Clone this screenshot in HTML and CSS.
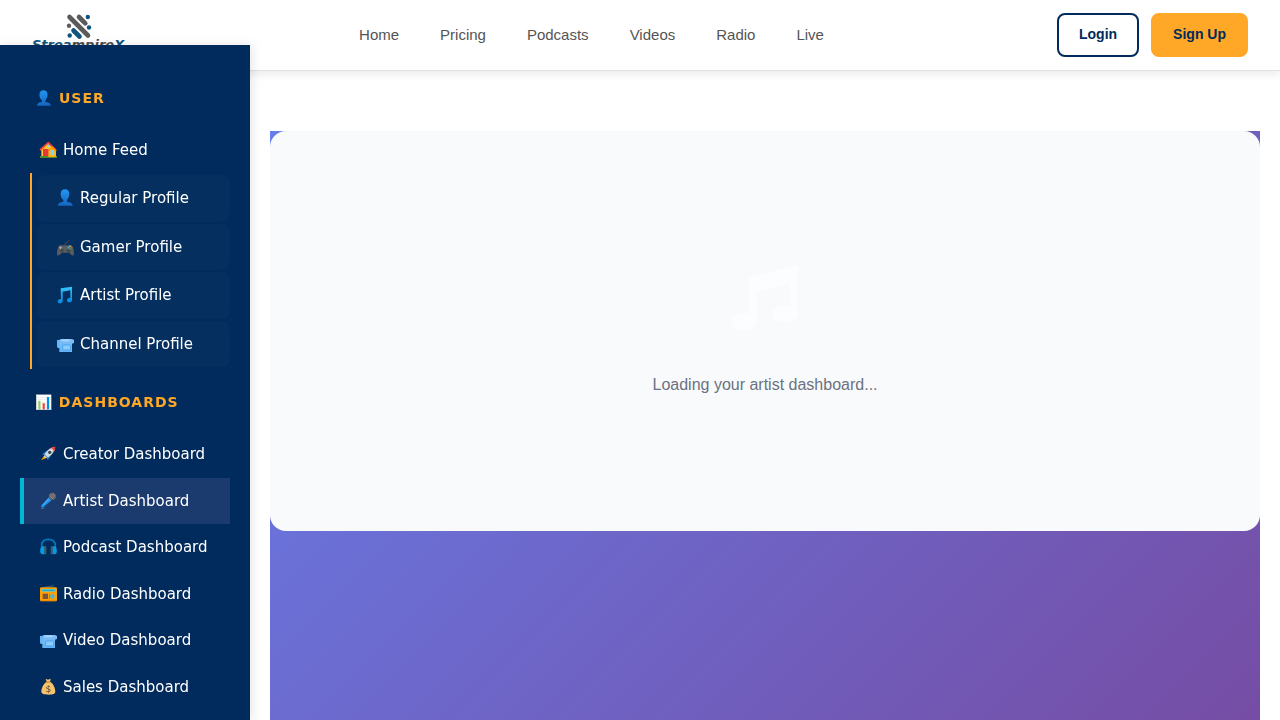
FILE: index.html
```html
<!DOCTYPE html>
<html lang="en">
<head>
<meta charset="utf-8">
<meta name="viewport" content="width=device-width, initial-scale=1">
<title>StreampireX</title>
<link rel="stylesheet" href="styles.css">
</head>
<body>
<svg class="sprite" width="0" height="0" aria-hidden="true">
  <defs>
    <linearGradient id="blue" x1="0" y1="0" x2="0" y2="1"><stop offset="0" stop-color="#2196f3"/><stop offset="1" stop-color="#1565c0"/></linearGradient>
    <linearGradient id="cyan" x1="0" y1="0" x2="0" y2="1"><stop offset="0" stop-color="#35c4fb"/><stop offset="1" stop-color="#0288e0"/></linearGradient>
    <linearGradient id="sky" x1="0" y1="0" x2="0" y2="1"><stop offset="0" stop-color="#82bdf5"/><stop offset="1" stop-color="#64b5f6"/></linearGradient>
  </defs>
  <symbol id="i-person" viewBox="0 0 54 54">
    <path fill="url(#blue)" d="M27 1C35 1 40 6 40 15C40 24 35 31 33 33V38C42 39 50 42 50 50H6C6 42 13 39 22 38V33C18 30 14 24 14 15C14 6 19 1 27 1Z"/>
  </symbol>
  <symbol id="i-home" viewBox="0 0 54 54">
    <path fill="#ffca28" d="M7 22L27 8L50 26V47H7Z"/>
    <path fill="#e53935" d="M12 24h17v23H12z"/>
    <path fill="#fbb918" d="M29 27l11-9 11 9v20H29z"/>
    <path fill="none" stroke="#f44336" stroke-width="5" stroke-linejoin="round" d="M3 27L28 5L51 27"/>
    <path fill="#ff9800" d="M28 27L39 15L53 29L50 32L39 22L31 30Z"/>
    <circle cx="29" cy="15" r="4" fill="#81d4fa"/>
    <path fill="#81d4fa" d="M35 27h10v15H35z"/>
    <path fill="#558b2f" d="M3 45h51v6H3z"/>
    <path fill="#ffb300" d="M28 44h22v4H28z"/>
  </symbol>
  <symbol id="i-game" viewBox="0 0 54 54">
    <path fill="none" stroke="#4a4f54" stroke-width="2.500" d="M27 22C26 15 29 14 33 14S37 9 41 5"/>
    <path fill="#5a5d60" d="M12 22H45C51 22 54 39 54 47C54 54 47 54 44 49L39 44H18L13 49C9 54 3 54 3 47C3 39 6 22 12 22Z"/>
    <circle cx="18" cy="38" r="6" fill="#44484b"/><circle cx="38" cy="38" r="6" fill="#44484b"/>
    <path stroke="#a5a8aa" stroke-width="3" d="M9 29h9M13.500 25v9"/>
    <circle cx="42" cy="25" r="2.500" fill="#ffca28"/><circle cx="37" cy="29" r="2.500" fill="#29b6f6"/>
    <circle cx="47" cy="29" r="2.500" fill="#f44336"/><circle cx="42" cy="33" r="2.500" fill="#4caf50"/>
  </symbol>
  <symbol id="i-note" viewBox="0 0 54 54">
    <path fill="url(#cyan)" d="M14 7L48 2V42C48 48 43 50 38 49C31 48 32 39 38 37L43 36V13L20 17V44C20 51 14 53 9 52C3 50 5 41 11 40L15 39Z"/>
  </symbol>
  <symbol id="i-camera" viewBox="0 0 54 54">
    <path fill="#64b5f6" d="M3 15L14 14V39H6L3 36Z"/>
    <path fill="url(#sky)" d="M13 12H48L54 15V24L48 26V51H10V24Z"/>
    <path fill="#a5d4fa" d="M17 13h24v6H17z"/>
    <rect x="20" y="30" width="24" height="15" rx="3" fill="#90caf9" stroke="#42a5f5" stroke-width="3"/>
  </symbol>
  <symbol id="i-rocket" viewBox="0 0 54 54">
    <path fill="#1e88e5" d="M23 17L9 28L18 30ZM36 31L26 46L23 36Z"/>
    <path fill="#ff9800" d="M15 32L6 46L22 39Z"/>
    <path fill="#cfd8dc" d="M15 35C18 20 31 8 48 6C47 22 34 36 20 40Z"/>
    <path fill="#f44336" d="M34 9C40 6 45 5 49 5C49 10 48 16 45 21C44 15 41 11 34 9Z"/>
    <circle cx="32" cy="22" r="5" fill="#37474f"/>
    <path stroke="#546e7a" stroke-width="3" d="M17 30l9 9"/>
  </symbol>
  <symbol id="i-mic" viewBox="0 0 54 54">
    <path fill="none" stroke="#78909c" stroke-width="2" d="M6 49h7l3-2"/>
    <path fill="#1e90e8" d="M29 16L38 25L11 47L5 43Z"/>
    <path stroke="#64b5f6" stroke-width="3" d="M29 21L11 40"/>
    <circle cx="40" cy="13" r="10.500" fill="#616161"/>
    <path stroke="#a0a0a0" stroke-width="2" d="M35 7l12 12M40 4l9 9M32 11l11 11"/>
  </symbol>
  <symbol id="i-phones" viewBox="0 0 54 54">
    <path fill="none" stroke="#0277bd" stroke-width="5" d="M8 30V23C8 10 16 4 28 4S49 10 49 23V30"/>
    <path fill="#039be5" d="M17 25V49H10C1 49 1 27 11 25ZM40 25V49H47C56 49 56 27 46 25Z"/>
    <path fill="#455a64" d="M16 25h6v24h-6zM35 25h6v24h-6z"/>
  </symbol>
  <symbol id="i-radio" viewBox="0 0 54 54">
    <path stroke="#607d8b" stroke-width="2" d="M16 7L45 2"/>
    <rect x="3" y="7" width="51" height="42" rx="4" fill="#ffa000"/>
    <path fill="#4dd0e1" d="M8 12h41v8H8z"/>
    <path stroke="#26828e" stroke-width="2" d="M10 16h37"/>
    <path fill="#795548" d="M11 26h16v16H11z"/>
    <path fill="#c97a12" d="M30 26h3v16h-3z"/>
    <circle cx="40" cy="34" r="7" fill="#4db6d0"/>
    <path stroke="#e67c00" stroke-width="2" d="M5 47h47"/>
  </symbol>
  <symbol id="i-bag" viewBox="0 0 54 54">
    <path fill="#f6c26b" d="M20 2L27 5L35 2L33 11C43 16 49 31 49 40C49 48 43 50 29 50S7 48 7 40C7 31 14 16 23 11Z"/>
    <path stroke="#b5792c" stroke-width="3" d="M21 12h14"/>
    <text x="28" y="43" text-anchor="middle" font-family="DejaVu Sans" font-size="27" fill="#5d4037">$</text>
  </symbol>
</svg>

<header class="header">
  <a class="logo" href="#" aria-label="StreampireX">
    <svg width="94" height="46" viewBox="0 0 94 46">
      <g fill="none" stroke-width="4.6" stroke-linecap="round">
        <path stroke="#5b5b5b" d="M37.5 5L56 23.5M47 5l6.3 6.3"/>
        <path stroke="#0f5580" d="M41.5 18.5l6 6"/>
      </g>
      <g fill="#0f5580">
        <circle cx="55.8" cy="5" r="2.2"/>
        <circle cx="57" cy="15.5" r="2.2"/>
        <circle cx="37.7" cy="23.5" r="2.2"/>
      </g>
      <circle cx="37" cy="13.8" r="2.2" fill="#5b5b5b"/>
      <text class="logo-text" x="0" y="37"><tspan fill="#0f5580">Strea</tspan><tspan fill="#4d4d4d">mpire</tspan><tspan fill="#0f5580">X</tspan></text>
    </svg>
  </a>
  <nav class="nav" aria-label="Main">
    <a href="#">Home</a>
    <a href="#">Pricing</a>
    <a href="#">Podcasts</a>
    <a href="#">Videos</a>
    <a href="#">Radio</a>
    <a href="#">Live</a>
  </nav>
  <div class="actions">
    <button class="btn btn-outline" type="button">Login</button>
    <button class="btn btn-primary" type="button">Sign Up</button>
  </div>
</header>

<aside class="sidebar">
  <h2 class="section-title"><svg class="title-icon"><use href="#i-person"/></svg>User</h2>
  <ul class="menu">
    <li><a class="menu-link" href="#"><svg class="icon"><use href="#i-home"/></svg>Home Feed</a></li>
  </ul>
  <ul class="submenu">
    <li><a class="submenu-link" href="#"><svg class="icon"><use href="#i-person"/></svg>Regular Profile</a></li>
    <li><a class="submenu-link" href="#"><svg class="icon"><use href="#i-game"/></svg>Gamer Profile</a></li>
    <li><a class="submenu-link" href="#"><svg class="icon"><use href="#i-note"/></svg>Artist Profile</a></li>
    <li><a class="submenu-link" href="#"><svg class="icon"><use href="#i-camera"/></svg>Channel Profile</a></li>
  </ul>
  <h2 class="section-title">📊 Dashboards</h2>
  <ul class="menu menu-dashboards">
    <li><a class="menu-link" href="#"><svg class="icon"><use href="#i-rocket"/></svg>Creator Dashboard</a></li>
    <li><a class="menu-link active" href="#" aria-current="page"><svg class="icon"><use href="#i-mic"/></svg>Artist Dashboard</a></li>
    <li><a class="menu-link" href="#"><svg class="icon"><use href="#i-phones"/></svg>Podcast Dashboard</a></li>
    <li><a class="menu-link" href="#"><svg class="icon"><use href="#i-radio"/></svg>Radio Dashboard</a></li>
    <li><a class="menu-link" href="#"><svg class="icon"><use href="#i-camera"/></svg>Video Dashboard</a></li>
    <li><a class="menu-link" href="#"><svg class="icon"><use href="#i-bag"/></svg>Sales Dashboard</a></li>
  </ul>
</aside>

<main class="content">
  <div class="dashboard">
    <section class="loading">
      <svg class="note" width="68" height="66" viewBox="0 0 68 66" fill="#fcfdfe" aria-hidden="true">
        <path d="M18 15Q18 13 20 12.3L64 .3Q67 -.3 67 2.5V48C67 54 61 57 54 57C47 57 41.500 53.500 41.500 49C41.500 44 48 40.500 54 40.500Q57 40.500 59.500 42V17.500L26 27V56C26 62 20 65 13 65C6 65 .5 61.500 .5 57C.5 52 6 48.500 13 48.500Q16 48.500 18 49.500Z"/>
      </svg>
      <p class="loading-text">Loading your artist dashboard...</p>
    </section>
  </div>
</main>
</body>
</html>
```
FILE: styles.css
```css
* {
  box-sizing: border-box;
}

body {
  margin: 0;
  background: #fff;
  font-family: "Liberation Sans", Arial, sans-serif;
}

a {
  color: inherit;
  text-decoration: none;
}

ul {
  list-style: none;
  margin: 0;
  padding: 0;
}

.sprite {
  position: absolute;
}

.header {
  position: sticky;
  top: 0;
  z-index: 10;
  display: flex;
  align-items: center;
  justify-content: space-between;
  padding: 12px 32px;
  min-height: 71px;
  background: #fff;
  border-bottom: 1px solid #dee2e6;
  box-shadow: 0 2px 10px rgba(0, 0, 0, 0.1);
}

.logo,
.logo svg {
  display: block;
}

.logo-text {
  font: italic bold 13px "DejaVu Sans", sans-serif;
}

.nav {
  display: flex;
  gap: 41px;
  padding-bottom: 2px;
  color: #555;
  font-size: 15px;
}

.actions {
  display: flex;
  gap: 12px;
}

.btn {
  padding: 9px 20px 11px;
  border: 2px solid #002b5c;
  border-radius: 8px;
  color: #002b5c;
  font: bold 14px/20px "Liberation Sans", Arial, sans-serif;
  cursor: pointer;
}

.btn-outline {
  background: #fff;
}

.btn-primary {
  background: #ffa726;
  border-color: #ffa726;
}

.sidebar {
  position: fixed;
  top: 45px;
  bottom: 0;
  left: 0;
  z-index: 20;
  width: 250px;
  padding: 20px;
  overflow: hidden;
  background: #002b5c;
  color: #fff;
  font: 15px/22px "DejaVu Sans", sans-serif;
  box-shadow: 2px 0 10px rgba(0, 0, 0, 0.1);
}

.section-title {
  display: flex;
  align-items: center;
  gap: 7px;
  margin: 22px 0 18px;
  padding: 0 15px;
  color: #ffa726;
  font-size: 14px;
  line-height: 22px;
  letter-spacing: 1px;
  text-transform: uppercase;
}

.title-icon {
  width: 17px;
  height: 17px;
}

.icon {
  flex: none;
  width: 18px;
  height: 18px;
}

.menu,
.submenu {
  display: grid;
  grid-auto-rows: 1fr;
}

.menu-dashboards {
  min-height: 279px;
}

.menu-link,
.submenu-link {
  display: flex;
  align-items: center;
  gap: 6px;
  height: 100%;
}

.menu-link {
  padding: 12px 15px;
  border-left: 4px solid transparent;
}

.menu-link.active {
  background: #1b3b6f;
  border-left-color: #00b8d4;
}

.submenu {
  min-height: 196px;
  margin-left: 10px;
  padding: 2px 0 2px 5px;
  gap: 2px;
  border-left: 2px solid #ffa726;
}

.submenu-link {
  padding: 12px 19px;
  border-radius: 8px;
  background: rgba(255, 255, 255, 0.02);
}

.content {
  margin-left: 250px;
  padding: 60px 20px 0;
}

.dashboard {
  min-height: calc(100vh - 71px);
  background: linear-gradient(135deg, #667eea 0%, #764ba2 100%);
}

.loading {
  display: flex;
  flex-direction: column;
  align-items: center;
  justify-content: center;
  gap: 42px;
  min-height: 400px;
  border-radius: 16px;
  background: #f8fafc;
}

.loading-text {
  margin: 0;
  color: #6b7280;
  font-size: 16px;
  line-height: 24px;
}
```
